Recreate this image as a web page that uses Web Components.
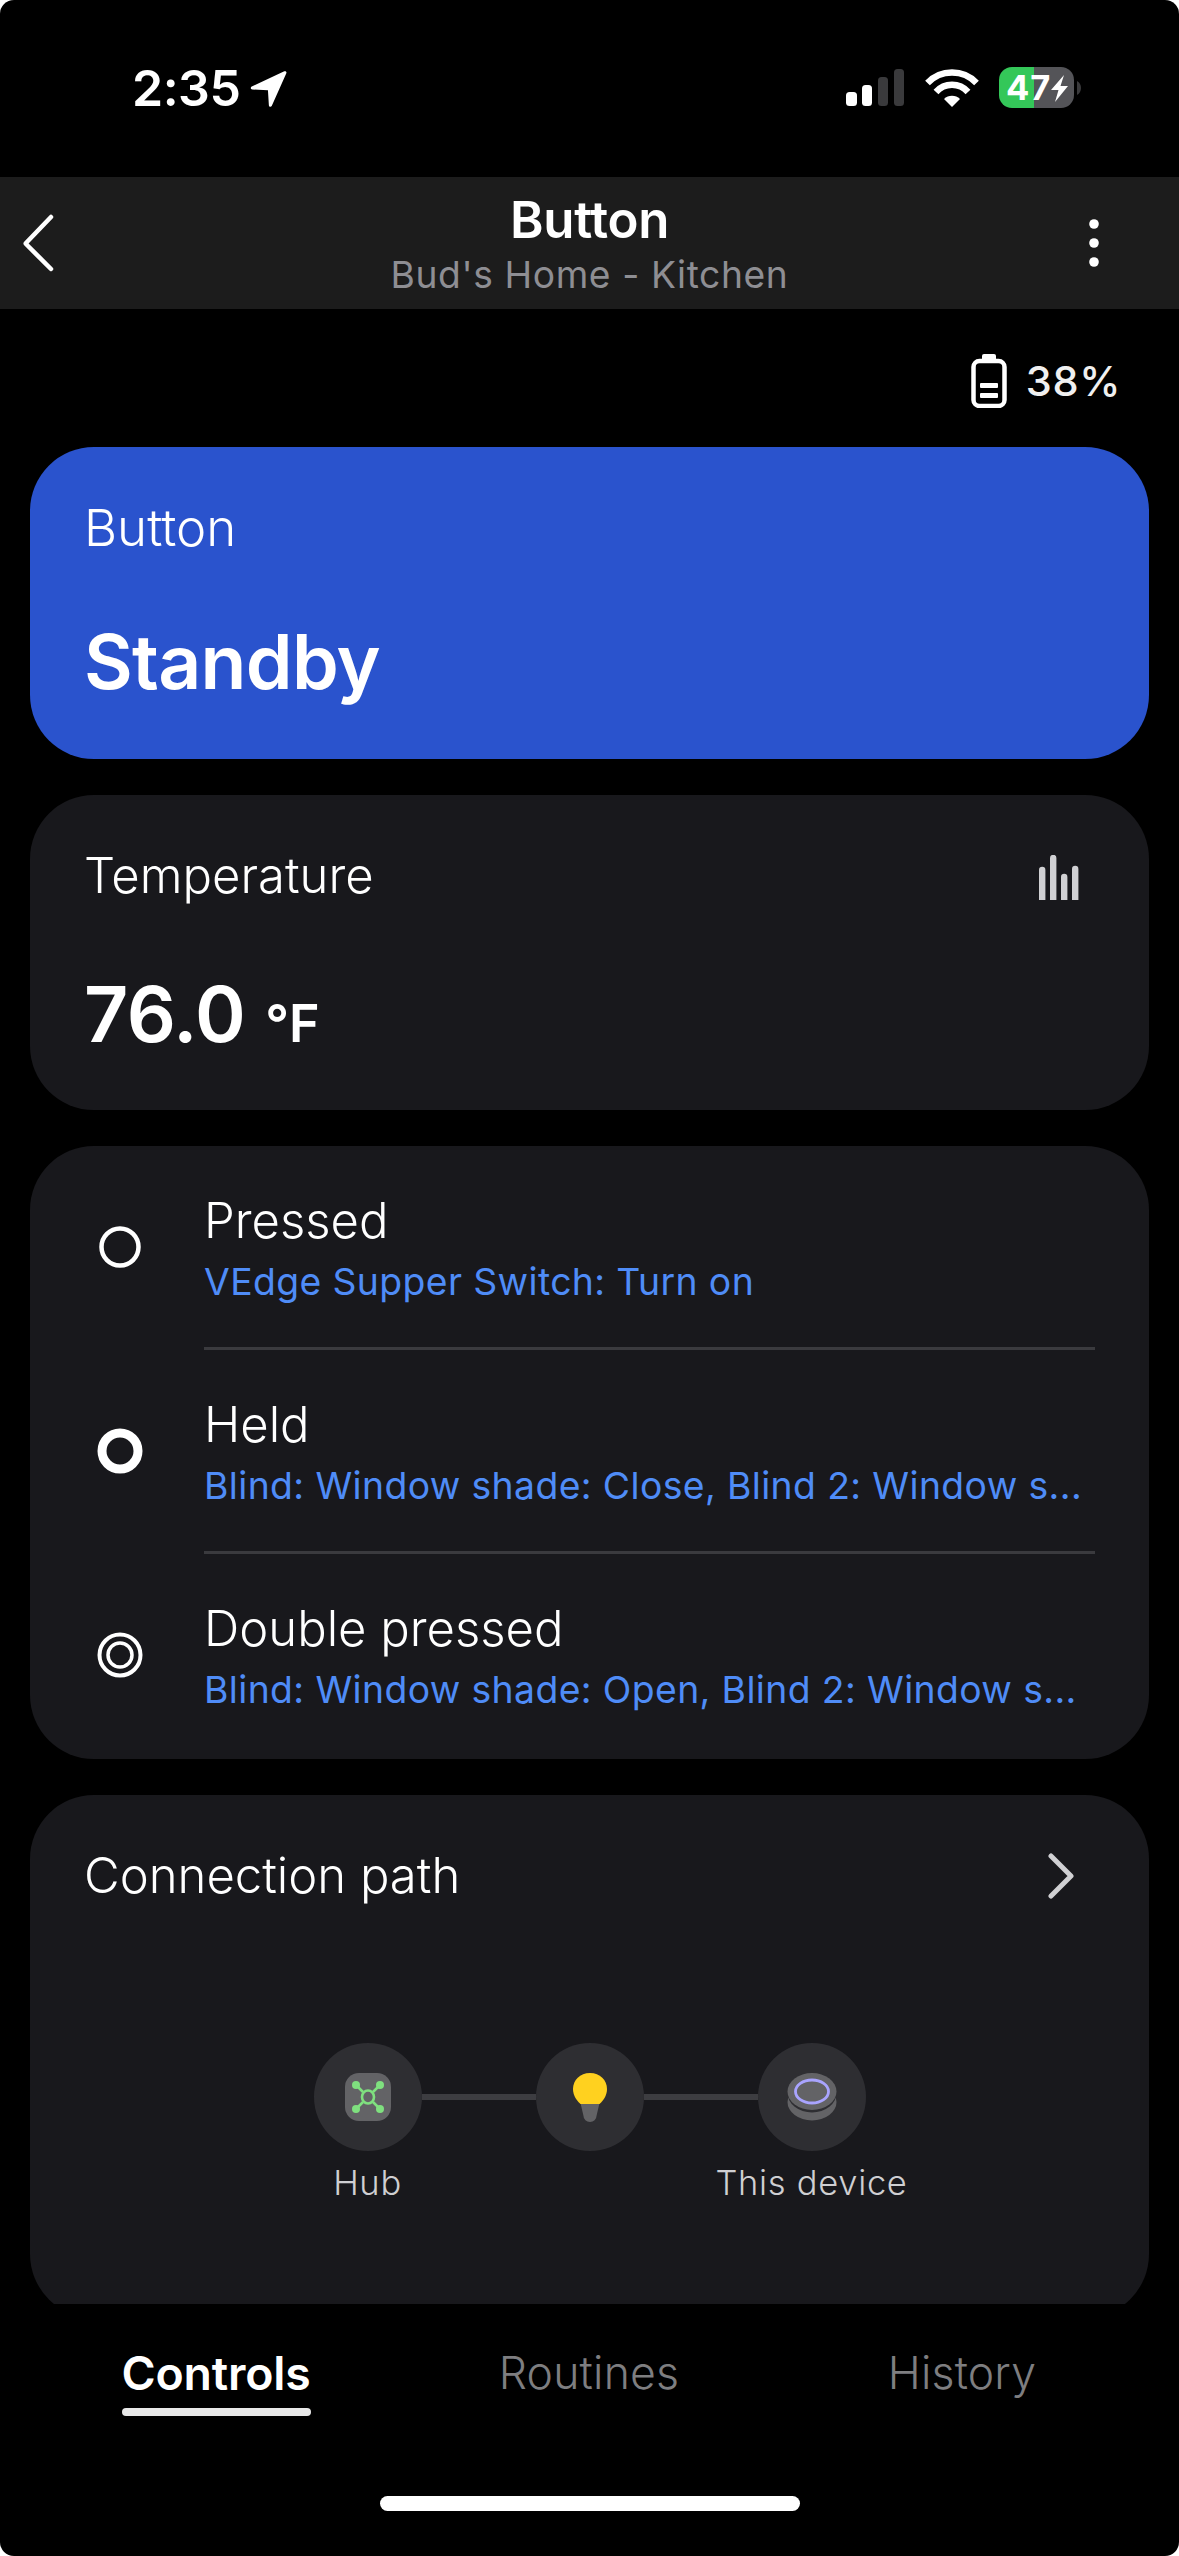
<!DOCTYPE html>
<html><head><meta charset="utf-8"><style>
html,body{margin:0;padding:0;background:#fff;}
body{width:1179px;height:2556px;overflow:hidden;font-family:Inter,"Liberation Sans",sans-serif;color:#fff;}
</style></head><body>
<app-screen>
<status-bar></status-bar>
<nav-bar title="Button" sub="Bud's Home - Kitchen"></nav-bar>
<battery-row value="38%"></battery-row>
<main-scroll>
<state-card label="Button" value="Standby"></state-card>
<temp-card></temp-card>
<actions-card>
<action-row kind="single" name="Pressed" detail="VEdge Supper Switch: Turn on"></action-row>
<action-row kind="held" name="Held" detail="Blind: Window shade: Close, Blind 2: Window s..."></action-row>
<action-row kind="double" name="Double pressed" detail="Blind: Window shade: Open, Blind 2: Window s..."></action-row>
</actions-card>
<path-card></path-card>
</main-scroll>
<tab-bar></tab-bar>
</app-screen>
<script>
function def(name,css,html){
  customElements.define(name,class extends HTMLElement{
    constructor(){super();this.attachShadow({mode:'open'});}
    connectedCallback(){
      const a=n=>this.getAttribute(n)||'';
      this.shadowRoot.innerHTML='<style>'+css+'</style>'+(typeof html==='function'?html(a):html);
    }
  });
}
def('app-screen',':host{display:flex;flex-direction:column;width:1179px;height:2556px;background:#000;overflow:hidden;border-radius:14px}','<slot></slot>');
def('status-bar',`:host{display:flex;height:177px;box-sizing:border-box;padding:59px 0 0 132px;align-items:flex-start;position:relative}
.t{font-size:50px;font-weight:600;line-height:58px;letter-spacing:-.5px}
.l{margin:10px 0 0 8px}
.r{position:absolute;left:0;top:0}
.p{position:absolute;left:1006px;top:66px;font-size:34.500px;line-height:43px;font-weight:700;letter-spacing:1px}`,`<span class="t">2:35</span>
<svg class="l" width="41" height="39" viewBox="0 0 42 42"><path d="M38 2.500 C39.500 1.800 40.800 3 40.200 4.600 L24.600 39.600 C23.800 41.300 21.600 41 21.400 39 L20.400 23 L3.600 22 C1.600 21.800 1.300 19.500 3 18.800 Z" fill="#fff"/></svg>
<svg class="r" width="1179" height="177" viewBox="0 0 1179 177">
<rect x="846" y="92" width="11" height="14" rx="3.500" fill="#fff"/><rect x="862" y="85" width="10" height="21" rx="3.500" fill="#fff"/>
<rect x="878" y="77" width="10" height="29" rx="3.500" fill="#3a3a3c"/><rect x="894" y="69" width="10" height="37" rx="3.500" fill="#3a3a3c"/>
<g fill="none" stroke="#fff" stroke-width="6.500"><path d="M927.500 83 A34 34 0 0 1 976.500 83"/><path d="M936 92 A21.500 21.500 0 0 1 968 92"/></g>
<path d="M944 99 A11.500 11.500 0 0 1 960 99 L952 107 Z" fill="#fff"/>
<defs><clipPath id="b"><rect x="999" y="67" width="75" height="41" rx="13"/></clipPath></defs>
<g clip-path="url(#b)"><rect x="999" y="67" width="35" height="41" fill="#34c759"/><rect x="1034" y="67" width="40" height="41" fill="#545458"/></g>
<path d="M1077 81 A8 8 0 0 1 1081 88 A8 8 0 0 1 1077 95 Z" fill="#3a3a3c"/>
<path d="M1064 75 L1051 90 H1058.500 L1055 102 L1068 86 H1060.500 Z" fill="#fff"/>
</svg>
<span class="p">47</span>`);
def('nav-bar',`:host{display:flex;flex:none;height:132px;background:#1c1c1c;align-items:center;position:relative;justify-content:center;flex-direction:column}
.a{font-size:51px;font-weight:600;line-height:54px;margin-top:5px;letter-spacing:-.3px}.b{font-size:37.200px;line-height:46px;color:#8e8e93;letter-spacing:.6px;margin-top:5px}
svg{position:absolute;top:0;left:0;overflow:visible}`,a=>`
<svg width="1179" height="132" viewBox="0 0 1179 132"><path d="M51 40 L26 66 Q25.500 66.500 26 67 L51 92" fill="none" stroke="#fff" stroke-width="4.500" stroke-linecap="round" stroke-linejoin="round"/>
<circle cx="1094" cy="47" r="4.800" fill="#fff"/><circle cx="1094" cy="66" r="4.800" fill="#fff"/><circle cx="1094" cy="85" r="4.800" fill="#fff"/></svg>
<div class="a">${a('title')}</div><div class="b">${a('sub')}</div>`);
def('battery-row',`:host{display:flex;flex:none;height:138px;justify-content:flex-end;align-items:center;padding-right:58px;gap:19px;box-sizing:border-box;padding-top:6px}
span{font-size:41.500px;font-weight:500;letter-spacing:.6px;color:#f0f0f0}`,a=>`
<svg width="36" height="54" viewBox="0 0 36 54"><rect x="2.500" y="7" width="31" height="45" rx="6" fill="none" stroke="#fff" stroke-width="4.500"/><rect x="11" y="0" width="14" height="8" rx="2" fill="#fff"/><rect x="9" y="29" width="18" height="5" rx="1" fill="#fff"/><rect x="9" y="39" width="18" height="5" rx="1" fill="#fff"/></svg>
<span>${a('value')}</span>`);
def('main-scroll',`:host{display:flex;flex:none;flex-direction:column;gap:36px;height:1857px;padding:0 30px;overflow:hidden}`,'<slot></slot>');
def('state-card',`:host{display:block;flex:none;height:312px;background:#2a53cd;border-radius:64px;padding:0 54px;box-sizing:border-box}
.a{font-size:51px;line-height:54px;padding-top:54px;font-weight:350}.b{font-size:75px;font-weight:600;line-height:88px;margin-top:63px;letter-spacing:-.7px}`,a=>`<div class="a">${a('label')}</div><div class="b">${a('value')}</div>`);
def('temp-card',`:host{display:block;flex:none;height:315px;background:#18181c;border-radius:64px;padding:0 54px;box-sizing:border-box;position:relative}
.a{font-size:49px;line-height:54px;padding-top:54px;font-weight:350}.b{display:flex;align-items:baseline;margin-top:66px;line-height:90px;font-weight:600}.n{font-size:77px;letter-spacing:-.5px}.u{font-size:52px;margin-left:20px}
svg{position:absolute;left:1009px;top:60px}`,`<div class="a">Temperature</div><div class="b"><span class="n">76.0</span><span class="u">°F</span></div>
<svg width="42" height="46" viewBox="0 0 42 46"><g fill="#d0d0d3"><path d="M0 45V15a3.200 3.200 0 0 1 6.400 0V45Z"/><path d="M11 45V3a3.200 3.200 0 0 1 6.400 0V45Z"/><path d="M22 45V22a3.200 3.200 0 0 1 6.400 0V45Z"/><path d="M33 45V14a3.200 3.200 0 0 1 6.400 0V45Z"/></g></svg>`);
def('actions-card',`:host{display:flex;flex-direction:column;flex:none;height:613px;background:#18181c;border-radius:64px;box-sizing:border-box}`,'<slot></slot>');
def('action-row',`:host{display:flex;flex:none;height:204px;box-sizing:border-box;position:relative}
.i{flex:none;width:174px;display:flex;align-items:center;justify-content:center;padding:0 0 3px 6px;box-sizing:border-box}
.t{flex:1;margin-right:54px;box-sizing:border-box;padding-top:48px;border-bottom:3px solid #3a3a3e;min-width:0;white-space:nowrap;overflow:hidden}
:host(:last-child) .t{border:0}
.a{font-size:49px;line-height:54px;font-weight:350}.b{font-size:37.300px;line-height:46px;color:#4f8cf7;margin-top:11px;letter-spacing:.4px}`,a=>{
 const k=a('kind');
 const g=k==='single'?'<circle cx="23" cy="23" r="18.500" fill="none" stroke="#fff" stroke-width="4.500"/>':
  k==='held'?'<circle cx="23" cy="23" r="18" fill="none" stroke="#fff" stroke-width="9"/>':
  '<circle cx="23" cy="23" r="20.500" fill="none" stroke="#fff" stroke-width="4"/><circle cx="23" cy="23" r="12" fill="none" stroke="#fff" stroke-width="3.500"/>';
 return `<div class="i"><svg width="46" height="46" viewBox="0 0 46 46">${g}</svg></div><div class="t"><div class="a">${a('name')}</div><div class="b">${a('detail')}</div></div>`;});
def('path-card',`:host{display:block;flex:none;height:523px;background:#18181c;border-radius:64px;padding:0 54px;box-sizing:border-box;position:relative}
.h{display:flex;justify-content:space-between;align-items:center;padding-top:54px}
.a{font-size:49px;line-height:54px;font-weight:350}
.p{display:flex;justify-content:center;margin:140px 0 0 -54px;width:1119px;align-items:flex-start}
.n{width:108px;flex:none;display:flex;flex-direction:column;align-items:center}
.c{width:108px;height:108px;border-radius:50%;background:#2e2e32;display:flex;align-items:center;justify-content:center}
.k{width:114px;height:6px;background:#3d3d41;margin-top:51px;flex:none}
.l{white-space:nowrap;font-size:34.500px;line-height:42px;color:#cfcfd2;margin-top:11px;letter-spacing:.7px;font-weight:350}`,`<div class="h"><div class="a">Connection path</div>
<svg width="28" height="46" viewBox="0 0 28 46" style="margin-right:20px"><path d="M4 3 L24 23 L4 43" fill="none" stroke="#d0d0d3" stroke-width="5" stroke-linecap="round" stroke-linejoin="round"/></svg></div>
<div class="p"><div class="n"><div class="c"><svg width="48" height="48" viewBox="0 0 48 48"><rect x="1" y="0" width="46" height="48" rx="14" fill="#636366"/><g stroke="#7fe07f" stroke-width="2.600" fill="none"><ellipse cx="24" cy="24" rx="6" ry="6.500"/><path d="M12 12 L19 19 M36 12 L29 19 M12 36 L19 29 M36 36 L29 29"/></g><g fill="#7fe07f"><circle cx="12" cy="12" r="4"/><circle cx="36" cy="12" r="4"/><circle cx="12" cy="36" r="4"/><circle cx="36" cy="36" r="4"/></g></svg></div><div class="l">Hub</div></div>
<div class="k"></div>
<div class="n"><div class="c"><svg width="36" height="50" viewBox="0 0 36 50"><path d="M8.500 31 H27.500 L24.500 44 A6.500 6 0 0 1 11.500 44 Z" fill="#636366"/><path d="M18 1 C8 1 1 8 1 17 C1 23 4 28 8.500 32 H27.500 C32 28 35 23 35 17 C35 8 28 1 18 1 Z" fill="#ffd11f"/></svg></div></div>
<div class="k"></div>
<div class="n"><div class="c"><svg width="50" height="48" viewBox="0 0 50 48"><ellipse cx="25" cy="29" rx="24.500" ry="18.500" fill="#636366"/><ellipse cx="25" cy="20" rx="24.500" ry="19.500" fill="#2e2e32"/><ellipse cx="25" cy="18.500" rx="24.500" ry="18.500" fill="#636366"/><ellipse cx="25" cy="18.500" rx="16.500" ry="11.500" fill="none" stroke="#a9a4ff" stroke-width="2.800"/></svg></div><div class="l">This device</div></div></div>`);
def('tab-bar',`:host{display:block;flex:none;flex-grow:1;position:relative}
.r{position:absolute;top:41px;left:0;width:100%;height:0}
.t{position:absolute;transform:translateX(-50%);font-size:44.500px;line-height:56px;color:#7e7e80;white-space:nowrap;letter-spacing:.2px;font-weight:350}
.on{color:#fff;font-weight:600;letter-spacing:-.2px;font-size:46.400px}
.u{position:absolute;left:122px;top:104px;width:189px;height:8px;border-radius:4px;background:#e8e8e8}
.h{position:absolute;left:380px;top:192px;width:420px;height:15px;border-radius:8px;background:#fff}`,`<div class="r"><span class="t on" style="left:216px">Controls</span><span class="t" style="left:589px">Routines</span><span class="t" style="left:962px">History</span></div><div class="u"></div><div class="h"></div>`);
</script>
</body></html>
